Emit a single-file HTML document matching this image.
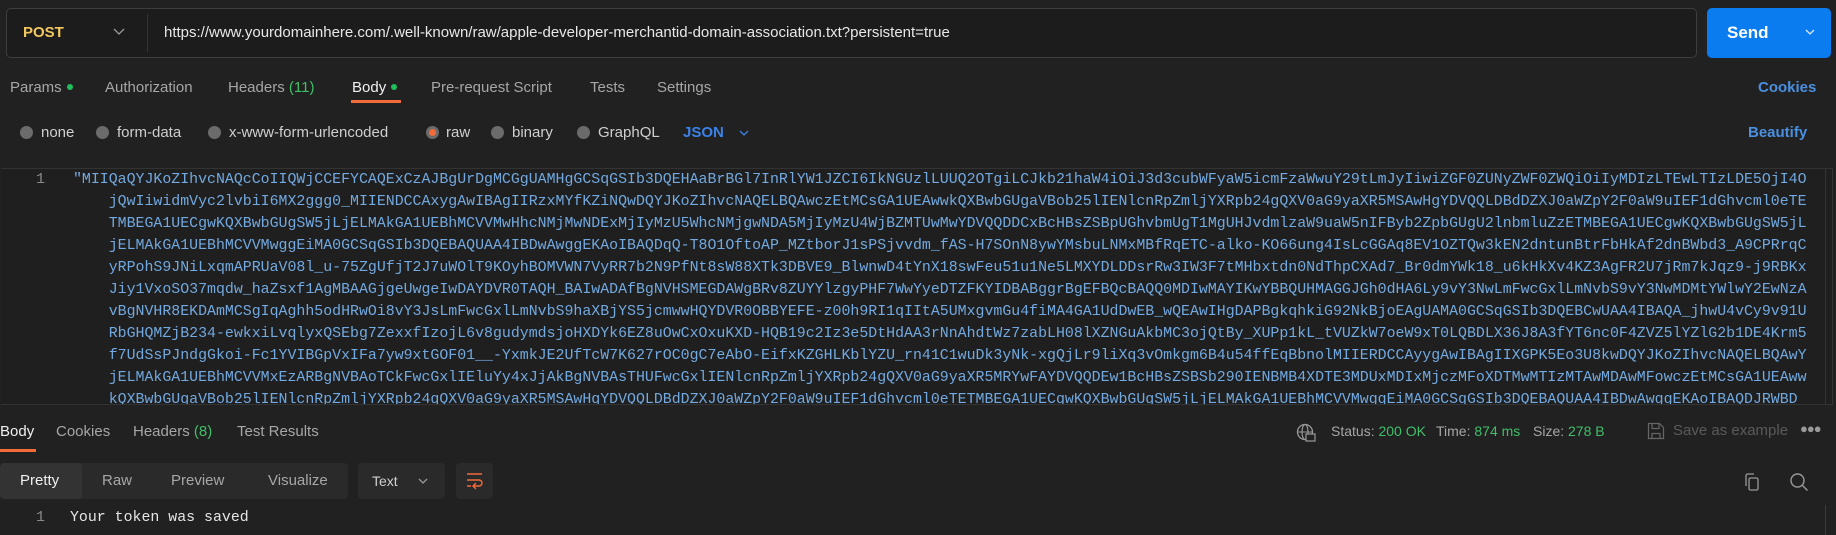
<!DOCTYPE html>
<html><head><meta charset="utf-8"><style>
*{margin:0;padding:0;box-sizing:border-box}
body{width:1836px;height:535px;background:#212121;font-family:"Liberation Sans",sans-serif;color:#a6a6a6;position:relative;overflow:hidden;font-size:15px}
.a{position:absolute;white-space:nowrap}
.url{left:6px;top:8px;width:1691px;height:50px;border:1px solid #3d3d3d;border-radius:5px;background:#1c1c1c}
.send{left:1707px;top:8px;width:124px;height:50px;background:#0a7cf0;border-radius:5px}
.dot{display:inline-block;width:6px;height:6px;border-radius:50%;background:#1fbf5b;margin-left:5px;vertical-align:2px}
.r{position:absolute;width:13px;height:13px;border-radius:50%;background:#6b6b6b;top:126px}
.ed{left:1px;top:168px;width:1832px;height:237px;border:1px solid #333;border-left:none;overflow:hidden;background:#1f1f1f}
.code{font-family:"Liberation Mono",monospace;font-size:14.9px;color:#72a9e0;line-height:22px;position:absolute;white-space:pre}
.green{color:#3fbf68}
</style></head><body>
<div class="a url"></div>
<div class="a" style="left:23px;top:24px;color:#f2c760;font-weight:bold;font-size:15px">POST</div>
<svg class="a" style="left:113px;top:28px" width="12" height="8"><path d="M1 1l5 5 5-5" stroke="#999" fill="none" stroke-width="1.3"/></svg>
<div class="a" style="left:147px;top:14px;width:1px;height:38px;background:#333"></div>
<div class="a" style="left:164px;top:24px;color:#e8e8e8;font-size:15px">https://www.yourdomainhere.com/.well-known/raw/apple-developer-merchantid-domain-association.txt?persistent=true</div>
<div class="a send"></div>
<div class="a" style="left:1727px;top:23px;color:#fff;font-weight:bold;font-size:17px">Send</div>
<svg class="a" style="left:1805px;top:29px" width="10" height="7"><path d="M1 1l4 4 4-4" stroke="#dce9ff" fill="none" stroke-width="1.3"/></svg>

<div class="a" style="left:10px;top:79px">Params<span class="dot"></span></div>
<div class="a" style="left:105px;top:79px">Authorization</div>
<div class="a" style="left:228px;top:79px">Headers <span class="green">(11)</span></div>
<div class="a" style="left:352px;top:79px;color:#f0f0f0">Body<span class="dot"></span></div>
<div class="a" style="left:351px;top:100px;width:50px;height:3px;background:#f26b3a"></div>
<div class="a" style="left:431px;top:79px">Pre-request Script</div>
<div class="a" style="left:590px;top:79px">Tests</div>
<div class="a" style="left:657px;top:79px">Settings</div>
<div class="a" style="left:1758px;top:79px;color:#4a8fe0;font-weight:bold">Cookies</div>

<div class="r" style="left:20px"></div><div class="a" style="left:41px;top:124px;color:#cfcfcf">none</div>
<div class="r" style="left:96px"></div><div class="a" style="left:117px;top:124px;color:#cfcfcf">form-data</div>
<div class="r" style="left:208px"></div><div class="a" style="left:229px;top:124px;color:#cfcfcf">x-www-form-urlencoded</div>
<div class="r" style="left:426px;background:#6b6b6b"></div><div class="a" style="left:429px;top:129px;width:7px;height:7px;border-radius:50%;background:#f26b3a"></div><div class="a" style="left:446px;top:124px;color:#cfcfcf">raw</div>
<div class="r" style="left:491px"></div><div class="a" style="left:512px;top:124px;color:#cfcfcf">binary</div>
<div class="r" style="left:577px"></div><div class="a" style="left:598px;top:124px;color:#cfcfcf">GraphQL</div>
<div class="a" style="left:683px;top:124px;color:#3b82e8;font-weight:bold">JSON</div>
<svg class="a" style="left:739px;top:130px" width="10" height="7"><path d="M1 1l4 4 4-4" stroke="#3b82e8" fill="none" stroke-width="1.3"/></svg>
<div class="a" style="left:1748px;top:124px;color:#4a8fe0;font-weight:bold">Beautify</div>

<div class="a ed">
<div class="code" style="left:35px;top:0px;color:#8a8a8a">1</div>
<div class="code" style="left:72px;top:0px">"MIIQaQYJKoZIhvcNAQcCoIIQWjCCEFYCAQExCzAJBgUrDgMCGgUAMHgGCSqGSIb3DQEHAaBrBGl7InRlYW1JZCI6IkNGUzlLUUQ2OTgiLCJkb21haW4iOiJ3d3cubWFyaW5icmFzaWwuY29tLmJyIiwiZGF0ZUNyZWF0ZWQiOiIyMDIzLTEwLTIzLDE5OjI4O
    jQwIiwidmVyc2lvbiI6MX2ggg0_MIIENDCCAxygAwIBAgIIRzxMYfKZiNQwDQYJKoZIhvcNAQELBQAwczEtMCsGA1UEAwwkQXBwbGUgaVBob25lIENlcnRpZmljYXRpb24gQXV0aG9yaXR5MSAwHgYDVQQLDBdDZXJ0aWZpY2F0aW9uIEF1dGhvcml0eTE
    TMBEGA1UECgwKQXBwbGUgSW5jLjELMAkGA1UEBhMCVVMwHhcNMjMwNDExMjIyMzU5WhcNMjgwNDA5MjIyMzU4WjBZMTUwMwYDVQQDDCxBcHBsZSBpUGhvbmUgT1MgUHJvdmlzaW9uaW5nIFByb2ZpbGUgU2lnbmluZzETMBEGA1UECgwKQXBwbGUgSW5jL
    jELMAkGA1UEBhMCVVMwggEiMA0GCSqGSIb3DQEBAQUAA4IBDwAwggEKAoIBAQDqQ-T8O1OftoAP_MZtborJ1sPSjvvdm_fAS-H7SOnN8ywYMsbuLNMxMBfRqETC-alko-KO66ung4IsLcGGAq8EV1OZTQw3kEN2dntunBtrFbHkAf2dnBWbd3_A9CPRrqC
    yRPohS9JNiLxqmAPRUaV08l_u-75ZgUfjT2J7uWOlT9KOyhBOMVWN7VyRR7b2N9PfNt8sW88XTk3DBVE9_BlwnwD4tYnX18swFeu51u1Ne5LMXYDLDDsrRw3IW3F7tMHbxtdn0NdThpCXAd7_Br0dmYWk18_u6kHkXv4KZ3AgFR2U7jRm7kJqz9-j9RBKx
    Jiy1VxoSO37mqdw_haZsxf1AgMBAAGjgeUwgeIwDAYDVR0TAQH_BAIwADAfBgNVHSMEGDAWgBRv8ZUYYlzgyPHF7WwYyeDTZFKYIDBABggrBgEFBQcBAQQ0MDIwMAYIKwYBBQUHMAGGJGh0dHA6Ly9vY3NwLmFwcGxlLmNvbS9vY3NwMDMtYWlwY2EwNzA
    vBgNVHR8EKDAmMCSgIqAghh5odHRwOi8vY3JsLmFwcGxlLmNvbS9haXBjYS5jcmwwHQYDVR0OBBYEFE-z00h9RI1qIItA5UMxgvmGu4fiMA4GA1UdDwEB_wQEAwIHgDAPBgkqhkiG92NkBjoEAgUAMA0GCSqGSIb3DQEBCwUAA4IBAQA_jhwU4vCy9v91U
    RbGHQMZjB234-ewkxiLvqlyxQSEbg7ZexxfIzojL6v8gudymdsjoHXDYk6EZ8uOwCxOxuKXD-HQB19c2Iz3e5DtHdAA3rNnAhdtWz7zabLH08lXZNGuAkbMC3ojQtBy_XUPp1kL_tVUZkW7oeW9xT0LQBDLX36J8A3fYT6nc0F4ZVZ5lYZlG2b1DE4Krm5
    f7UdSsPJndgGkoi-Fc1YVIBGpVxIFa7yw9xtGOF01__-YxmkJE2UfTcW7K627rOC0gC7eAbO-EifxKZGHLKblYZU_rn41C1wuDk3yNk-xgQjLr9liXq3vOmkgm6B4u54ffEqBbnolMIIERDCCAyygAwIBAgIIXGPK5Eo3U8kwDQYJKoZIhvcNAQELBQAwY
    jELMAkGA1UEBhMCVVMxEzARBgNVBAoTCkFwcGxlIEluYy4xJjAkBgNVBAsTHUFwcGxlIENlcnRpZmljYXRpb24gQXV0aG9yaXR5MRYwFAYDVQQDEw1BcHBsZSBSb290IENBMB4XDTE3MDUxMDIxMjczMFoXDTMwMTIzMTAwMDAwMFowczEtMCsGA1UEAww
    kQXBwbGUgaVBob25lIENlcnRpZmljYXRpb24gQXV0aG9yaXR5MSAwHgYDVQQLDBdDZXJ0aWZpY2F0aW9uIEF1dGhvcml0eTETMBEGA1UECgwKQXBwbGUgSW5jLjELMAkGA1UEBhMCVVMwggEiMA0GCSqGSIb3DQEBAQUAA4IBDwAwggEKAoIBAQDJRWBD</div>
</div>
<div class="a" style="left:1825px;top:168px;width:1px;height:237px;background:#333"></div>

<div class="a" style="left:0px;top:423px;color:#f0f0f0">Body</div>
<div class="a" style="left:0px;top:449px;width:36px;height:3px;background:#f26b3a"></div>
<div class="a" style="left:56px;top:423px">Cookies</div>
<div class="a" style="left:133px;top:423px">Headers <span class="green">(8)</span></div>
<div class="a" style="left:237px;top:423px">Test Results</div>

<svg class="a" style="left:1296px;top:423px" width="20" height="20"><circle cx="9" cy="9" r="7.5" stroke="#999" fill="none" stroke-width="1.3"/><ellipse cx="9" cy="9" rx="3" ry="7.5" stroke="#999" fill="none" stroke-width="1.2"/><path d="M1.5 9h15" stroke="#999"/><rect x="10" y="11" width="9" height="7" fill="#212121" stroke="#999" stroke-width="1.2"/></svg>
<div class="a" style="left:1331px;top:423px;font-size:14px">Status: <span class="green">200 OK</span></div>
<div class="a" style="left:1436px;top:423px;font-size:14px">Time: <span class="green">874 ms</span></div>
<div class="a" style="left:1533px;top:423px;font-size:14px">Size: <span class="green">278 B</span></div>
<svg class="a" style="left:1647px;top:422px" width="18" height="18"><path d="M1.5 1.5h11l4 4v11h-15z M5 1.5v5h7v-5 M5 16.5v-5h8v5" stroke="#666" fill="none" stroke-width="1.2"/></svg>
<div class="a" style="left:1673px;top:422px;color:#5a5a5a;font-size:15px">Save as example</div>
<div class="a" style="left:1800px;top:421px;color:#999;font-size:13px;letter-spacing:-1px">●●●</div>

<div class="a" style="left:0;top:463px;width:348px;height:36px;background:#2a2a2a;border-radius:4px"></div>
<div class="a" style="left:0;top:463px;width:82px;height:36px;background:#333;border-radius:4px"></div>
<div class="a" style="left:20px;top:472px;color:#f0f0f0">Pretty</div>
<div class="a" style="left:102px;top:472px">Raw</div>
<div class="a" style="left:171px;top:472px">Preview</div>
<div class="a" style="left:268px;top:472px">Visualize</div>
<div class="a" style="left:358px;top:463px;width:87px;height:36px;background:#2a2a2a;border-radius:4px"></div>
<div class="a" style="left:372px;top:473px;color:#cfcfcf;font-size:14px">Text</div>
<svg class="a" style="left:418px;top:478px" width="10" height="7"><path d="M1 1l4 4 4-4" stroke="#999" fill="none" stroke-width="1.3"/></svg>
<div class="a" style="left:456px;top:463px;width:37px;height:36px;background:#2a2a2a;border-radius:4px"></div>
<svg class="a" style="left:466px;top:472px" width="18" height="18"><path d="M1 2h15M1 8h12a3 3 0 0 1 0 6h-5M10 11l-3 3 3 3M1 14h4" stroke="#f26b3a" fill="none" stroke-width="1.4"/></svg>
<svg class="a" style="left:1743px;top:472px" width="20" height="20"><rect x="6" y="6" width="9" height="12" rx="1.5" stroke="#999" fill="none" stroke-width="1.3"/><path d="M3 14V3.5A1.5 1.5 0 0 1 4.5 2H11" stroke="#999" fill="none" stroke-width="1.3"/></svg>
<svg class="a" style="left:1789px;top:472px" width="20" height="20"><circle cx="8.5" cy="8.5" r="6.5" stroke="#999" fill="none" stroke-width="1.4"/><path d="M13.5 13.5l5 5" stroke="#999" stroke-width="1.4"/></svg>
<div class="a" style="left:1825px;top:505px;width:1px;height:30px;background:#3a3a3a"></div>

<div class="code" style="left:36px;top:507px;color:#8a8a8a">1</div>
<div class="code" style="left:70px;top:507px;color:#e6e6e6">Your token was saved</div>
</body></html>
